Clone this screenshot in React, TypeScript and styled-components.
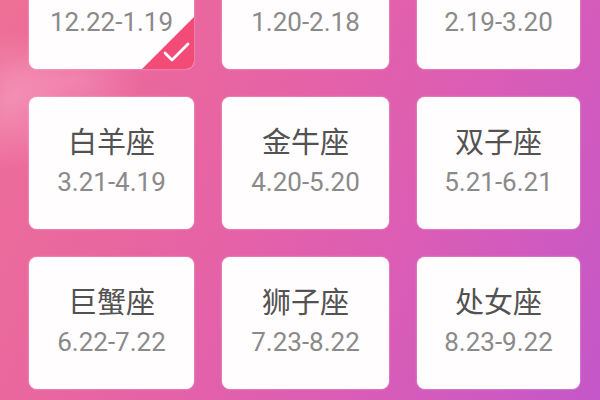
import React from "react";
import styled, { createGlobalStyle } from "styled-components";

const Global = createGlobalStyle`
  html, body { margin: 0; padding: 0; }
  body { width: 600px; height: 400px; overflow: hidden; }
`;

const Page = styled.div`
  width: 600px;
  height: 400px;
  overflow: hidden;
  position: relative;
  background:
    radial-gradient(ellipse 60px 70px at 10px 100px, rgba(255, 205, 228, 0.35), rgba(255, 205, 228, 0) 100%),
    radial-gradient(ellipse 70px 40px at 70px 82px, rgba(255, 195, 222, 0.3), rgba(255, 195, 222, 0) 100%),
    linear-gradient(115deg, #ee6f96 0%, #e864a2 35%, #dc5db4 65%, #c457c9 100%);
`;

const Grid = styled.div`
  display: grid;
  grid-template-columns: 165px 167px 163px;
  grid-auto-rows: 132px;
  column-gap: 28px;
  row-gap: 28px;
  padding-left: 29px;
  margin-top: -63px;
`;

const Card = styled.div`
  position: relative;
  background: #fffdfd;
  border-radius: 8px;
  overflow: hidden;
  display: flex;
  flex-direction: column;
  align-items: center;
  justify-content: flex-start;
  padding-top: 25px;
  box-sizing: border-box;
  box-shadow: 0 0 2px rgba(255, 255, 255, 0.6);
`;

const Title = styled.div`
  font-family: "Noto Sans CJK SC", "Noto Sans", sans-serif;
  font-size: 29px;
  line-height: 36px;
  color: #525252;
`;

const DateText = styled.div`
  font-family: Roboto, "Noto Sans", sans-serif;
  font-size: 26px;
  line-height: 34px;
  margin-top: 7px;
  color: #8a8a8a;
`;

const Corner = styled.svg`
  position: absolute;
  right: 0;
  bottom: 0;
  width: 52px;
  height: 52px;
`;

const signs = [
  ["摩羯座", "12.22-1.19", true],
  ["水瓶座", "1.20-2.18", false],
  ["双鱼座", "2.19-3.20", false],
  ["白羊座", "3.21-4.19", false],
  ["金牛座", "4.20-5.20", false],
  ["双子座", "5.21-6.21", false],
  ["巨蟹座", "6.22-7.22", false],
  ["狮子座", "7.23-8.22", false],
  ["处女座", "8.23-9.22", false],
] as const;

export default function App() {
  return (
    <>
      <Global />
      <Page>
        <Grid>
          {signs.map(([name, date, checked]) => (
            <Card key={name}>
              <Title>{name}</Title>
              <DateText>{date}</DateText>
              {checked && (
                <Corner viewBox="0 0 52 52">
                  <polygon points="52,0 52,52 0,52" fill="#f24b77" />
                  <polyline
                    points="23,36 30,43 46,27"
                    fill="none"
                    stroke="#fff"
                    strokeWidth="2.8"
                    strokeLinecap="round"
                    strokeLinejoin="round"
                  />
                </Corner>
              )}
            </Card>
          ))}
        </Grid>
      </Page>
    </>
  );
}
